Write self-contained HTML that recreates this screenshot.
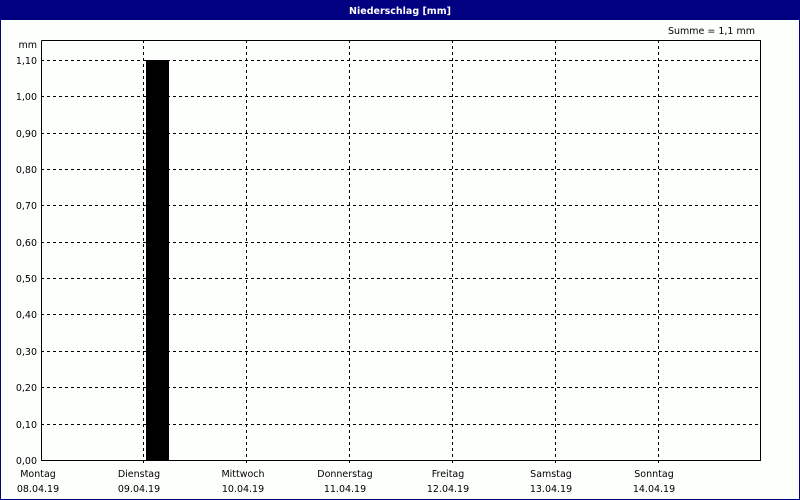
<!DOCTYPE html>
<html><head><style>
html,body{margin:0;padding:0;background:#fff;}
svg{display:block;font-family:"DejaVu Sans","Liberation Sans",sans-serif;font-size:9.5px;}
</style></head><body>
<svg width="800" height="500" xmlns="http://www.w3.org/2000/svg">
<rect x="0" y="0" width="800" height="500" fill="#000080"/>
<rect x="1" y="20" width="798" height="479" fill="#fdfffd"/>
<text x="400" y="14" fill="#fff" font-weight="bold" text-anchor="middle">Niederschlag [mm]</text>
<text x="755" y="34" text-anchor="end">Summe = 1,1 mm</text>
<text x="37" y="48" text-anchor="end">mm</text>
<g stroke="#000" stroke-width="1" stroke-dasharray="3,3" shape-rendering="crispEdges">
<line x1="41" y1="60.5" x2="760" y2="60.5"/>
<line x1="41" y1="96.5" x2="760" y2="96.5"/>
<line x1="41" y1="133.5" x2="760" y2="133.5"/>
<line x1="41" y1="169.5" x2="760" y2="169.5"/>
<line x1="41" y1="205.5" x2="760" y2="205.5"/>
<line x1="41" y1="242.5" x2="760" y2="242.5"/>
<line x1="41" y1="278.5" x2="760" y2="278.5"/>
<line x1="41" y1="314.5" x2="760" y2="314.5"/>
<line x1="41" y1="351.5" x2="760" y2="351.5"/>
<line x1="41" y1="387.5" x2="760" y2="387.5"/>
<line x1="41" y1="424.5" x2="760" y2="424.5"/>
<line x1="143.5" y1="40" x2="143.5" y2="464"/>
<line x1="246.5" y1="40" x2="246.5" y2="464"/>
<line x1="349.5" y1="40" x2="349.5" y2="464"/>
<line x1="452.5" y1="40" x2="452.5" y2="464"/>
<line x1="555.5" y1="40" x2="555.5" y2="464"/>
<line x1="658.5" y1="40" x2="658.5" y2="464"/>
</g>
<rect x="146" y="60" width="23" height="400" fill="#000"/>
<g stroke="#000" stroke-width="1" fill="none" shape-rendering="crispEdges">
<polyline points="41.5,40.5 41.5,460.5 760.5,460.5 760.5,40.5 41.5,40.5"/>
</g>
<g text-anchor="end">
<text x="37" y="64">1,10</text>
<text x="37" y="100">1,00</text>
<text x="37" y="137">0,90</text>
<text x="37" y="173">0,80</text>
<text x="37" y="209">0,70</text>
<text x="37" y="246">0,60</text>
<text x="37" y="282">0,50</text>
<text x="37" y="318">0,40</text>
<text x="37" y="355">0,30</text>
<text x="37" y="391">0,20</text>
<text x="37" y="428">0,10</text>
<text x="37" y="464">0,00</text>
</g>
<g text-anchor="middle">
<text x="38" y="477">Montag</text><text x="38" y="492">08.04.19</text>
<text x="139" y="477">Dienstag</text><text x="139" y="492">09.04.19</text>
<text x="243" y="477">Mittwoch</text><text x="243" y="492">10.04.19</text>
<text x="345" y="477">Donnerstag</text><text x="345" y="492">11.04.19</text>
<text x="448" y="477">Freitag</text><text x="448" y="492">12.04.19</text>
<text x="551" y="477">Samstag</text><text x="551" y="492">13.04.19</text>
<text x="654" y="477">Sonntag</text><text x="654" y="492">14.04.19</text>
</g>
</svg>
</body></html>
